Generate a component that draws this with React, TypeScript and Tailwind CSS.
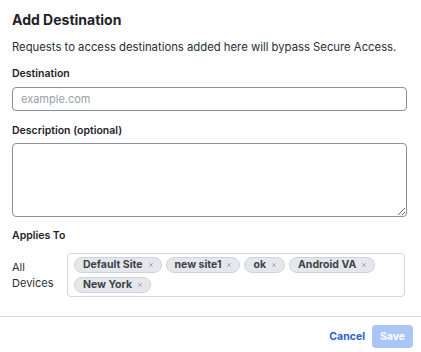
import { X } from "lucide-react";

const sites = ["Default Site", "new site1", "ok", "Android VA", "New York"];

function Tag({ label }: { label: string }) {
  return (
    <span className="flex h-4 items-center gap-[5px] rounded-full border border-[#d0d4da] bg-[#e4e7eb] pl-[8px] pr-[7px] text-[10.5px] font-bold leading-none text-[#3d4248]">
      {label}
      <X className="h-[6px] w-[6px] text-[#80858d]" strokeWidth={2.5} />
    </span>
  );
}

export default function App() {
  return (
    <div
      className="flex h-[352px] w-[421px] flex-col bg-white text-[#1f2329]"
      style={{ fontFamily: "Inter, 'Noto Sans', sans-serif" }}
    >
      <div className="flex flex-col px-3 pt-[10px]">
        <h2 className="text-[14px] font-bold leading-5">Add Destination</h2>
        <p className="mt-[9px] text-[11.3px] leading-4 text-[#2a2e34]">
          Requests to access destinations added here will bypass Secure Access.
        </p>

        <label className="mt-[11px] text-[10.5px] font-semibold leading-4">Destination</label>
        <input
          type="text"
          placeholder="example.com"
          className="mt-[5px] h-6 w-[395px] rounded-[4px] border border-[#8b9099] px-2 text-[11px] text-[#1f2329] outline-none placeholder:text-[#9aa0a8]"
        />

        <label className="mt-3 text-[10.5px] font-semibold leading-4">Description (optional)</label>
        <textarea className="mt-1 h-[74px] w-[395px] rounded-[4px] border border-[#8b9099] px-2 py-1 text-[11px] outline-none" />

        <p className="mt-[11px] text-[10.5px] font-semibold leading-4">Applies To</p>
        <div className="mt-[9px] flex items-center">
          <span className="w-[55px] text-[11px] leading-4 text-[#2a2e34]">All Devices</span>
          <div className="flex h-[44px] w-[338px] flex-wrap content-start gap-x-1 gap-y-1 rounded-[4px] border border-[#d4d7dc] pl-[6px] pr-2 pt-[3px]">
            {sites.map((s) => (
              <Tag key={s} label={s} />
            ))}
          </div>
        </div>
      </div>

      <div className="mt-[19px] flex flex-col border-t border-[#d4d7dc]">
        <div className="flex items-center justify-end gap-[7px] pr-2 pt-2">
          <button type="button" className="text-[10.5px] font-bold text-[#2c62d6]">
            Cancel
          </button>
          <button
            type="button"
            disabled
            className="h-[23px] w-[41px] rounded-[4px] bg-[#a9c6f7] text-[10.5px] font-bold text-white"
          >
            Save
          </button>
        </div>
      </div>
    </div>
  );
}
